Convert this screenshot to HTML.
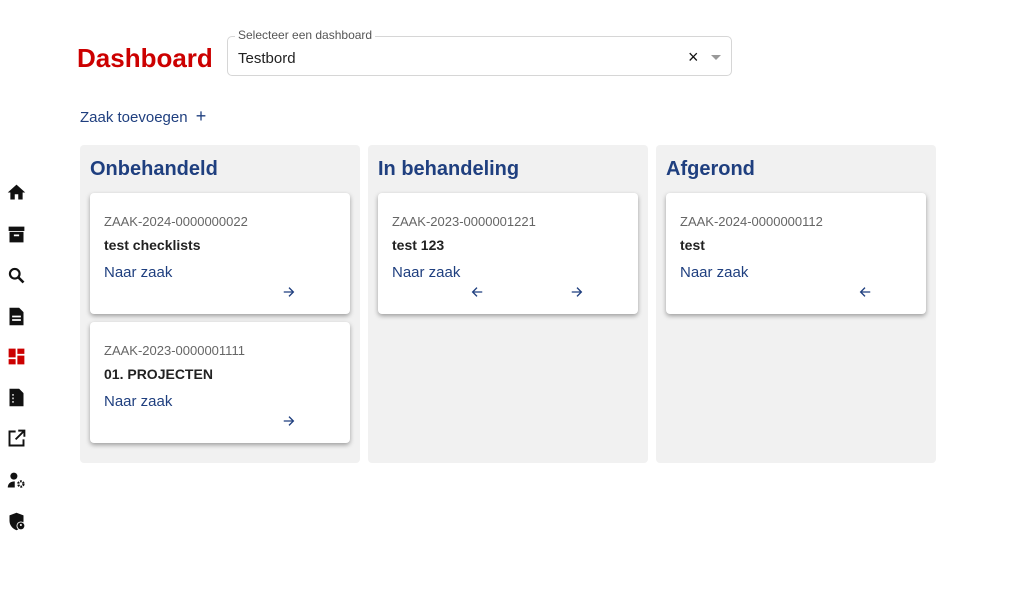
<!DOCTYPE html>
<html><head><meta charset="utf-8"><style>
*{box-sizing:border-box;margin:0;padding:0}
body{width:1027px;height:616px;background:#fff;font-family:"Liberation Sans",Arial,sans-serif;position:relative;overflow:hidden}
.ic{position:absolute;left:6px;width:21px;height:21px}
h1{position:absolute;left:77px;top:43px;font-size:26px;font-weight:bold;color:#cc0000}
.sel{position:absolute;left:227px;top:36px;width:505px;height:40px;border:1px solid #d6d6d6;border-radius:5px}
.sel .lab{position:absolute;left:7px;top:-9px;background:#fff;padding:0 3px;font-size:12px;color:#555}
.sel .val{position:absolute;left:10px;top:13px;font-size:15px;color:#222}
.add{position:absolute;left:80px;top:106px;font-size:15px;color:#1f3f7f}
.col{position:absolute;top:145px;width:280px;height:318px;background:#f1f1f1;border-radius:4px}
.col h2{position:absolute;left:10px;top:13px;font-size:20px;font-weight:bold;color:#1f3f7f}
.card{position:absolute;left:10px;width:260px;height:121px;background:#fff;border-radius:4px;box-shadow:0 2px 5px rgba(0,0,0,.35)}
.card .n{position:absolute;left:14px;top:21px;font-size:13px;color:#666}
.card .t{position:absolute;left:14px;top:44px;font-size:14px;font-weight:bold;color:#222}
.card .l{position:absolute;left:14px;top:71px;font-size:15px;color:#1f3f7f}
.card svg{position:absolute;top:92px;width:14px;height:14px}
</style></head><body>
<svg class="ic" style="top:182px" viewBox="0 0 24 24"><path d="M10 20v-6h4v6h5v-8h3L12 3 2 12h3v8z" fill="#111"/></svg>
<svg class="ic" style="top:224px" viewBox="0 0 24 24"><path d="M3 3h18v5H3zM4 9h16v12H4zM9 12v2h6v-2z" fill="#111" fill-rule="evenodd"/></svg>
<svg class="ic" style="top:265px" viewBox="0 0 24 24"><circle cx="10" cy="10" r="5.5" fill="none" stroke="#111" stroke-width="2.5"/><path d="M14 14l6 6" stroke="#111" stroke-width="3"/></svg>
<svg class="ic" style="top:306px" viewBox="0 0 24 24"><path d="M4 2h11l5 5v15H4zM7 11h10v2H7zM7 15h10v2H7z" fill="#111" fill-rule="evenodd"/></svg>
<svg class="ic" style="top:346px" viewBox="0 0 24 24"><path d="M3 3h8v10H3zM13 3h8v6h-8zM3 15h8v6H3zM13 11h8v10h-8z" fill="#cc0000"/></svg>
<svg class="ic" style="top:387px" viewBox="0 0 24 24"><path d="M4 2h11l5 5v15H4z" fill="#111"/><path d="M8 8v2M8 12v2M8 16v2" stroke="#fff" stroke-width="1.5"/></svg>
<svg class="ic" style="top:428px" viewBox="0 0 24 24"><path d="M11 4H4v16h16v-7" fill="none" stroke="#111" stroke-width="2.2"/><path d="M14 3h7v7M21 3l-10 10" fill="none" stroke="#111" stroke-width="2.2"/></svg>
<svg class="ic" style="top:470px" viewBox="0 0 24 24"><circle cx="9" cy="7" r="4" fill="#111"/><path d="M2 20c0-5 4-7 8-7v7z" fill="#111"/><circle cx="17" cy="16" r="3" fill="none" stroke="#111" stroke-width="2.5" stroke-dasharray="2 1.2"/></svg>
<svg class="ic" style="top:511px" viewBox="0 0 24 24"><path d="M12 2l8 3v6c0 5-3 9-8 11-5-2-8-6-8-11V5z" fill="#111"/><circle cx="17" cy="17" r="5" fill="#fff"/><circle cx="17" cy="17" r="4" fill="#111"/><circle cx="17" cy="16" r="1.2" fill="#fff"/></svg>
<h1>Dashboard</h1>
<div class="sel"><span class="lab">Selecteer een dashboard</span><span class="val">Testbord</span>
<span style="position:absolute;left:460px;top:10px;font-size:18px;color:#111">×</span>
<span style="position:absolute;left:483px;top:18px;border-left:5px solid transparent;border-right:5px solid transparent;border-top:5px solid #999"></span></div>
<div class="add">Zaak toevoegen <span style="font-size:18px;margin-left:4px">+</span></div>

<div class="col" style="left:80px"><h2>Onbehandeld</h2>
<div class="card" style="top:48px"><span class="n">ZAAK-2024-0000000022</span><span class="t">test checklists</span><span class="l">Naar zaak</span>
<svg style="left:192px" viewBox="0 0 16 16"><path d="M2 8h11M8 3l5 5-5 5" fill="none" stroke="#1f3f7f" stroke-width="1.5"/></svg></div>
<div class="card" style="top:177px"><span class="n">ZAAK-2023-0000001111</span><span class="t">01. PROJECTEN</span><span class="l">Naar zaak</span>
<svg style="left:192px" viewBox="0 0 16 16"><path d="M2 8h11M8 3l5 5-5 5" fill="none" stroke="#1f3f7f" stroke-width="1.5"/></svg></div>
</div>
<div class="col" style="left:368px"><h2>In behandeling</h2>
<div class="card" style="top:48px"><span class="n">ZAAK-2023-0000001221</span><span class="t">test 123</span><span class="l">Naar zaak</span>
<svg style="left:92px" viewBox="0 0 16 16"><path d="M14 8H3M8 3L3 8l5 5" fill="none" stroke="#1f3f7f" stroke-width="1.5"/></svg>
<svg style="left:192px" viewBox="0 0 16 16"><path d="M2 8h11M8 3l5 5-5 5" fill="none" stroke="#1f3f7f" stroke-width="1.5"/></svg></div>
</div>
<div class="col" style="left:656px"><h2>Afgerond</h2>
<div class="card" style="top:48px"><span class="n">ZAAK-2024-0000000112</span><span class="t">test</span><span class="l">Naar zaak</span>
<svg style="left:192px" viewBox="0 0 16 16"><path d="M14 8H3M8 3L3 8l5 5" fill="none" stroke="#1f3f7f" stroke-width="1.5"/></svg></div>
</div>
</body></html>
